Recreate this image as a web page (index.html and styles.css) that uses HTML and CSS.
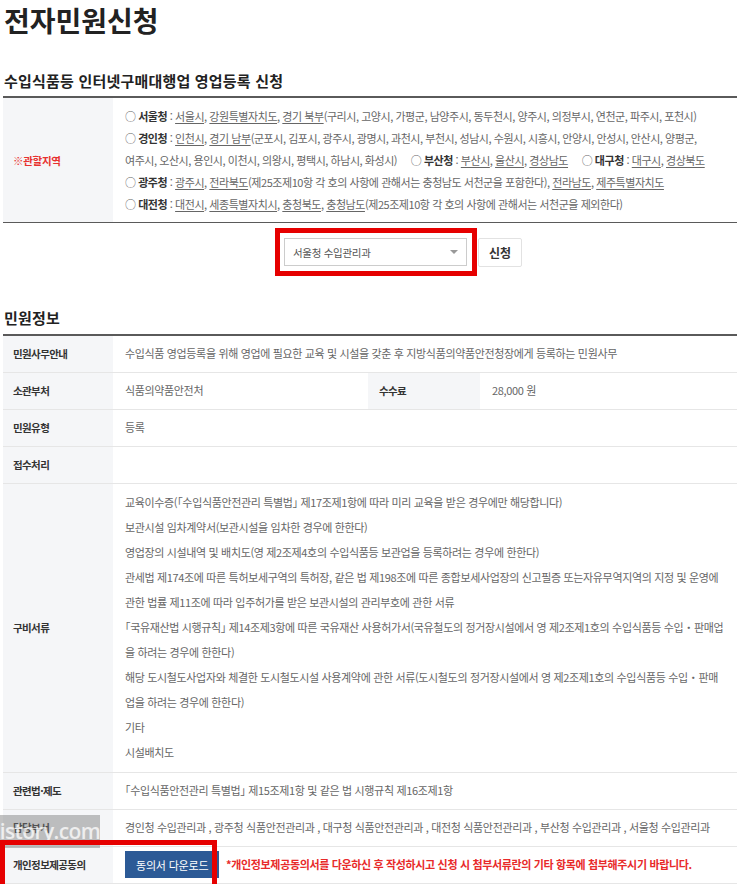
FILE: index.html
```html
<!DOCTYPE html>
<html lang="ko">
<head>
    <meta charset="UTF-8">
    <meta name="viewport" content="width=device-width, initial-scale=1.0">
    <title>전자민원신청</title>
    <link rel="stylesheet" href="styles.css">
</head>
<body>

    <div class="page">
        <h1 class="page-title">전자민원신청</h1>

        <h2 class="section-title">수입식품등 인터넷구매대행업 영업등록 신청</h2>
        <table class="region-table">
            <tr>
                <th class="required">※관할지역</th>
                <td>
                    <p>○ <b>서울청</b> : <u>서울시</u>, <u>강원특별자치도</u>, <u>경기 북부</u>(구리시, 고양시, 가평군, 남양주시, 동두천시, 양주시, 의정부시, 연천군, 파주시, 포천시)</p>
                    <p>○ <b>경인청</b> : <u>인천시</u>, <u>경기 남부</u>(군포시, 김포시, 광주시, 광명시, 과천시, 부천시, 성남시, 수원시, 시흥시, 안양시, 안성시, 안산시, 양평군, 여주시, 오산시, 용인시, 이천시, 의왕시, 평택시, 하남시, 화성시)
                        <span class="region">○ <b>부산청</b> : <u>부산시</u>, <u>울산시</u>, <u>경상남도</u></span>
                        <span class="region">○ <b>대구청</b> : <u>대구시</u>, <u>경상북도</u></span>
                    </p>
                    <p>○ <b>광주청</b> : <u>광주시</u>, <u>전라북도</u>(제25조제10항 각 호의 사항에 관해서는 충청남도 서천군을 포함한다), <u>전라남도</u>, <u>제주특별자치도</u></p>
                    <p>○ <b>대전청</b> : <u>대전시</u>, <u>세종특별자치시</u>, <u>충청북도</u>, <u>충청남도</u>(제25조제10항 각 호의 사항에 관해서는 서천군을 제외한다)</p>
                </td>
            </tr>
        </table>

        <div class="apply-row">
            <div class="mark-box">
                <div class="office-select">
                    <span>서울청 수입관리과</span>
                    <span class="caret"></span>
                </div>
            </div>
            <button type="button" class="apply-btn">신청</button>
        </div>

        <h2 class="section-title info-title">민원정보</h2>
        <table class="info-table">
            <colgroup>
                <col class="col-label">
                <col class="col-value">
                <col class="col-label2">
                <col>
            </colgroup>
            <tr>
                <th>민원사무안내</th>
                <td colspan="3">수입식품 영업등록을 위해 영업에 필요한 교육 및 시설을 갖춘 후 지방식품의약품안전청장에게 등록하는 민원사무</td>
            </tr>
            <tr>
                <th>소관부처</th>
                <td>식품의약품안전처</td>
                <th class="sub-label">수수료</th>
                <td>28,000 원</td>
            </tr>
            <tr>
                <th>민원유형</th>
                <td colspan="3">등록</td>
            </tr>
            <tr>
                <th>접수처리</th>
                <td colspan="3"></td>
            </tr>
            <tr>
                <th>구비서류</th>
                <td colspan="3" class="docs">
                    <p>교육이수증(「수입식품안전관리 특별법」 제17조제1항에 따라 미리 교육을 받은 경우에만 해당합니다)</p>
                    <p>보관시설 임차계약서(보관시설을 임차한 경우에 한한다)</p>
                    <p>영업장의 시설내역 및 배치도(영 제2조제4호의 수입식품등 보관업을 등록하려는 경우에 한한다)</p>
                    <p>관세법 제174조에 따른 특허보세구역의 특허장, 같은 법 제198조에 따른 종합보세사업장의 신고필증 또는자유무역지역의 지정 및 운영에 관한 법률 제11조에 따라 입주허가를 받은 보관시설의 관리부호에 관한 서류</p>
                    <p>「국유재산법 시행규칙」 제14조제3항에 따른 국유재산 사용허가서(국유철도의 정거장시설에서 영 제2조제1호의 수입식품등 수입<span class="mid">・</span>판매업을 하려는 경우에 한한다)</p>
                    <p>해당 도시철도사업자와 체결한 도시철도시설 사용계약에 관한 서류(도시철도의 정거장시설에서 영 제2조제1호의 수입식품등 수입<span class="mid">・</span>판매업을 하려는 경우에 한한다)</p>
                    <p>기타</p>
                    <p>시설배치도</p>
                </td>
            </tr>
            <tr>
                <th>관련법·제도</th>
                <td colspan="3">「수입식품안전관리 특별법」 제15조제1항 및 같은 법 시행규칙 제16조제1항</td>
            </tr>
            <tr>
                <th>담당부서</th>
                <td colspan="3">경인청 수입관리과 , 광주청 식품안전관리과 , 대구청 식품안전관리과 , 대전청 식품안전관리과 , 부산청 수입관리과 , 서울청 수입관리과</td>
            </tr>
            <tr>
                <th class="consent-label">
                    <div class="watermark"><span>tistory.com</span></div>
                    <div class="mark-frame"></div>
                    개인정보제공동의
                </th>
                <td colspan="3">
                    <button type="button" class="download-btn">동의서 다운로드</button>
                    <span class="notice">*개인정보제공동의서를 다운하신 후 작성하시고 신청 시 첨부서류란의 기타 항목에 첨부해주시기 바랍니다.</span>
                </td>
            </tr>
        </table>
    </div>

</body>
</html>
```

FILE: styles.css
```css
* {
    margin: 0;
    padding: 0;
    box-sizing: border-box;
}

body {
    font-family: 'Noto Sans CJK KR', 'Noto Sans', sans-serif;
    color: #333;
    background-color: #fff;
}

.page {
    padding: 0 7px 0 3px;
}

.page-title {
    font-size: 28px;
    font-weight: 700;
    line-height: 40px;
    color: #222;
    padding-left: 1px;
}

.section-title {
    margin-top: 30px;
    padding: 0 1px 4px;
    font-size: 15px;
    font-weight: 700;
    line-height: 22px;
    color: #222;
    letter-spacing: 0.2px;
}

.info-title {
    margin-top: 31px;
    padding-bottom: 5px;
}

/* 관할지역 */
.region-table {
    width: 100%;
    border-collapse: collapse;
    border-top: 2px solid #5a5a5a;
    border-bottom: 1px solid #5a5a5a;
}

.region-table th {
    width: 110px;
    padding-left: 10px;
    text-align: left;
    background-color: #f5f6f8;
}

.region-table th.required {
    color: #e8312f;
    font-size: 10.5px;
    font-weight: 700;
    letter-spacing: -0.3px;
}

.region-table td {
    padding: 7px 12px;
    font-size: 11px;
    line-height: 22px;
    color: #666;
    letter-spacing: -0.45px;
    word-break: keep-all;
}

.region {
    margin-left: 11px;
}

.region-table b {
    color: #333;
}

.region-table u {
    text-underline-offset: 2px;
}

/* 신청 */
.apply-row {
    display: flex;
    align-items: center;
    margin-top: 5px;
    padding-left: 272px;
}

.mark-box {
    border: 5px solid #e60000;
    padding: 5px 5px 5px 4px;
}

.office-select {
    display: flex;
    align-items: center;
    justify-content: space-between;
    width: 183px;
    height: 28px;
    padding: 0 8px;
    border: 1px solid #ccc;
    background-color: #fff;
    font-size: 10.5px;
    color: #555;
    letter-spacing: -0.3px;
}

.caret {
    width: 0;
    height: 0;
    border-left: 4px solid transparent;
    border-right: 4px solid transparent;
    border-top: 4px solid #999;
}

.apply-btn {
    width: 44px;
    height: 29px;
    margin-left: 1px;
    border: 1px solid #e2e2e2;
    border-radius: 2px;
    background-color: #fff;
    font-family: inherit;
    font-size: 12px;
    font-weight: 700;
    color: #333;
}

/* 민원정보 */
.info-table {
    width: 100%;
    border-collapse: collapse;
    border-top: 2px solid #5a5a5a;
    table-layout: fixed;
}

.col-label {
    width: 110px;
}

.col-value {
    width: 255px;
}

.col-label2 {
    width: 112px;
}

.info-table th,
.info-table td {
    height: 37px;
    border-bottom: 1px solid #e6e6e6;
    line-height: 15px;
    vertical-align: middle;
    text-align: left;
}

.info-table th {
    padding: 0 10px;
    background-color: #f5f6f8;
    font-size: 10.5px;
    font-weight: 700;
    color: #333;
    letter-spacing: -0.6px;
}

.info-table td {
    padding: 0 12px;
    font-size: 11px;
    color: #666;
    letter-spacing: -0.35px;
    font-feature-settings: "halt";
}

.info-table td .mid {
    font-feature-settings: normal;
}

.info-table th.sub-label {
    padding-left: 11px;
}

.info-table td.docs {
    padding: 6px 12px 7px;
    line-height: 25px;
}

.consent-label {
    position: relative;
}

.download-btn {
    height: 27px;
    padding: 0 11px;
    margin-right: 4px;
    border: none;
    background-color: #2c5a96;
    font-family: inherit;
    font-size: 11px;
    color: #fff;
    letter-spacing: -0.2px;
    vertical-align: middle;
}

.notice {
    color: #e82a2a;
    font-weight: 700;
    vertical-align: middle;
}

/* 캡처 위에 얹힌 표시 */
.mark-frame {
    position: absolute;
    left: -3px;
    top: -7px;
    width: 217px;
    height: 52px;
    border: 5px solid #e60000;
}

.watermark {
    position: absolute;
    left: -3px;
    top: -32px;
    width: 100px;
    height: 33px;
    overflow: hidden;
    background-color: rgba(120, 120, 120, 0.45);
}

.watermark span {
    display: block;
    margin-left: -8px;
    font-family: 'Open Sans', sans-serif;
    font-size: 21px;
    font-weight: 600;
    line-height: 33px;
    color: rgba(255, 255, 255, 0.75);
    white-space: nowrap;
}
```
